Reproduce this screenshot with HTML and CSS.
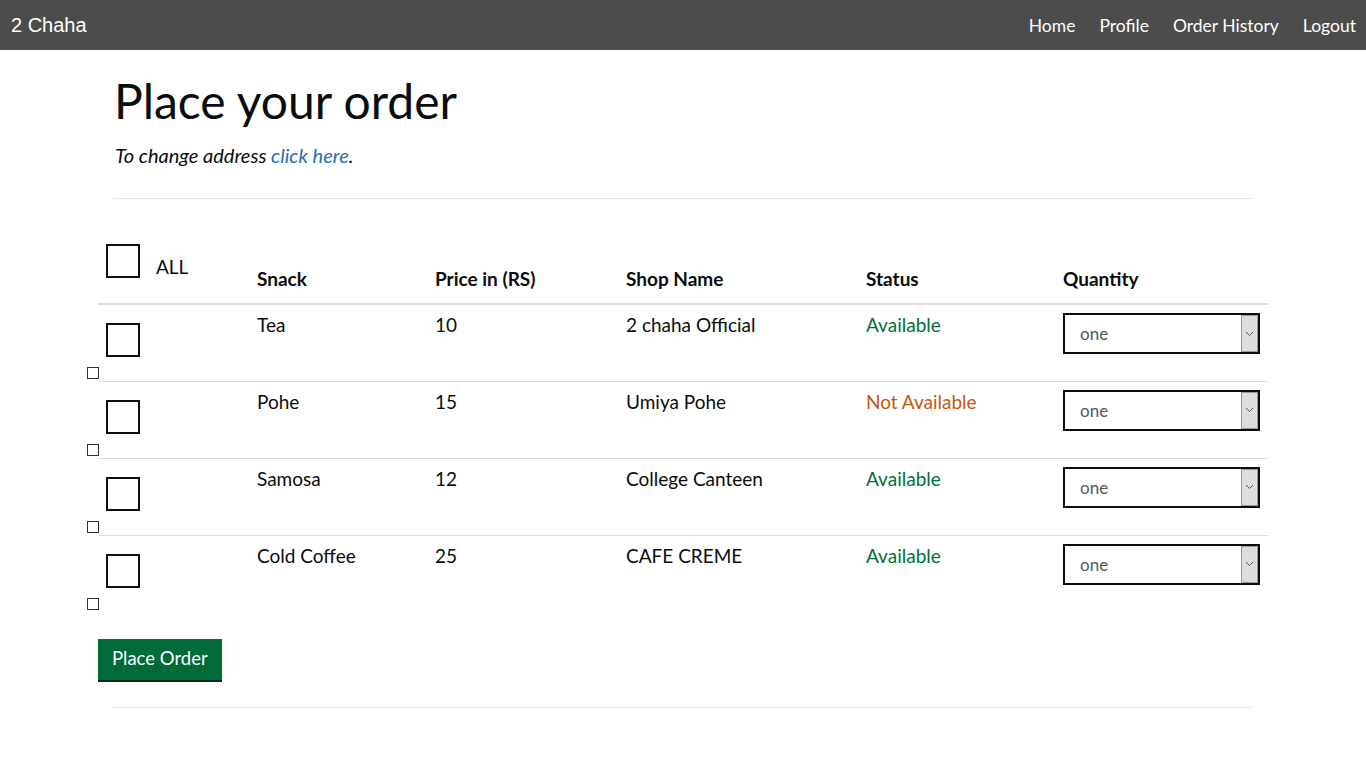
FILE: index.html
```html
<!DOCTYPE html>
<html lang="en">
<head>
<meta charset="utf-8">
<title>2 Chaha - Place your order</title>
<link rel="stylesheet" href="styles.css">
</head>
<body>
<nav class="navbar">
  <a class="brand" href="#">2 Chaha</a>
  <ul class="nav-links">
    <li><a href="#">Home</a></li>
    <li><a href="#">Profile</a></li>
    <li><a href="#">Order History</a></li>
    <li><a href="#">Logout</a></li>
  </ul>
</nav>
<main class="container">
  <h1 class="title">Place your order</h1>
  <p class="lead"><em>To change address <a href="#">click here</a>.</em></p>
  <hr class="rule rule-top">
  <form class="order-form">
    <table class="orders">
      <colgroup>
        <col class="c-check"><col class="c-snack"><col class="c-price"><col class="c-shop"><col class="c-status"><col class="c-qty">
      </colgroup>
      <thead>
        <tr>
          <th class="check-head"><div class="head-wrap"><span class="big-box"></span><span class="all">ALL</span></div></th>
          <th>Snack</th>
          <th>Price in (RS)</th>
          <th>Shop Name</th>
          <th>Status</th>
          <th>Quantity</th>
        </tr>
      </thead>
      <tbody>
        <tr>
          <td class="check-cell"><span class="big-box"></span><span class="small-box"></span></td>
          <td>Tea</td><td>10</td><td>2 chaha Official</td>
          <td class="ok">Available</td>
          <td class="qty"><div class="select"><span class="val">one</span><span class="arrow"><svg width="9" height="6" viewBox="0 0 9 6"><path d="M1 1l3.5 3.5L8 1" fill="none" stroke="#555" stroke-width="1"/></svg></span></div></td>
        </tr>
        <tr>
          <td class="check-cell"><span class="big-box"></span><span class="small-box"></span></td>
          <td>Pohe</td><td>15</td><td>Umiya Pohe</td>
          <td class="na">Not Available</td>
          <td class="qty"><div class="select"><span class="val">one</span><span class="arrow"><svg width="9" height="6" viewBox="0 0 9 6"><path d="M1 1l3.5 3.5L8 1" fill="none" stroke="#555" stroke-width="1"/></svg></span></div></td>
        </tr>
        <tr>
          <td class="check-cell"><span class="big-box"></span><span class="small-box"></span></td>
          <td>Samosa</td><td>12</td><td>College Canteen</td>
          <td class="ok">Available</td>
          <td class="qty"><div class="select"><span class="val">one</span><span class="arrow"><svg width="9" height="6" viewBox="0 0 9 6"><path d="M1 1l3.5 3.5L8 1" fill="none" stroke="#555" stroke-width="1"/></svg></span></div></td>
        </tr>
        <tr class="last">
          <td class="check-cell"><span class="big-box"></span><span class="small-box"></span></td>
          <td>Cold Coffee</td><td>25</td><td>CAFE CREME</td>
          <td class="ok">Available</td>
          <td class="qty"><div class="select"><span class="val">one</span><span class="arrow"><svg width="9" height="6" viewBox="0 0 9 6"><path d="M1 1l3.5 3.5L8 1" fill="none" stroke="#555" stroke-width="1"/></svg></span></div></td>
        </tr>
      </tbody>
    </table>
    <button type="button" class="btn">Place Order</button>
  </form>
  <hr class="rule rule-bottom">
</main>
</body>
</html>
```
FILE: styles.css
```css
* { box-sizing: border-box; }
html, body { margin: 0; padding: 0; background: #fff; }
body { font-family: Lato, "Noto Sans", sans-serif; color: #0b0c0c; }

.navbar {
  height: 50px;
  background: #4c4c4c;
  display: flex;
  align-items: center;
  justify-content: space-between;
  padding: 0 10px 0 11px;
}
.brand {
  font-family: "Liberation Sans", Arial, sans-serif;
  font-size: 20px;
  color: #fff;
  text-decoration: none;
}
.nav-links {
  list-style: none;
  margin: 0;
  padding: 0;
  display: flex;
  gap: 24px;
}
.nav-links a {
  color: #fff;
  text-decoration: none;
  font-family: Lato, sans-serif;
  font-size: 17.5px;
}

.container {
  width: 1140px;
  margin: 0 auto;
}
.title {
  margin: 0;
  padding-top: 23px;
  font-family: Lato, sans-serif;
  font-weight: 400;
  font-size: 48px;
  line-height: 56px;
  padding-left: 1px;
}
.lead {
  margin: 14px 0 0 2px;
  font-size: 20px;
  line-height: 25px;
}
.lead a { color: #1d70b8; text-decoration: none; }
.rule {
  border: 0;
  border-top: 1px solid #e8e8e8;
  margin: 0;
}
.rule-top { margin-top: 30px; }

.order-form { margin: 35px -15px 0; }
.orders {
  width: 1170px;
  border-collapse: collapse;
  table-layout: fixed;
  font-size: 19px;
}
.c-check { width: 159px; }
.c-snack { width: 178px; }
.c-price { width: 191px; }
.c-shop { width: 240px; }
.c-status { width: 197px; }
.c-qty { width: 205px; }

.orders th {
  text-align: left;
  font-weight: 700;
  vertical-align: bottom;
  padding: 0 0 12px;
  line-height: 25px;
  border-bottom: 2px solid #dcdcdc;
}
.orders th.check-head {
  vertical-align: top;
  padding: 10px 0 24px 8px;
  font-weight: 400;
}
.head-wrap {
  display: flex;
  align-items: flex-start;
}
.check-head .all { margin: 10px 0 0 16px; line-height: 25px; }

.big-box {
  display: block;
  width: 34px;
  height: 34px;
  border: 2px solid #0b0c0c;
  background: #fff;
}
.small-box {
  display: block;
  width: 12px;
  height: 12px;
  border: 1px solid #333;
  margin: 10px 0 0 -19px;
}

.orders td {
  vertical-align: top;
  padding: 7px 0 0;
  height: 77px;
  line-height: 25px;
  border-bottom: 1px solid #dcdcdc;
}
.orders tr.last td { border-bottom: 0; }
.orders td.check-cell { padding: 18px 0 0 8px; }
.orders td.qty { padding-top: 8px; }
.ok { color: #00703c; }
.na { color: #c9560f; }

.select {
  width: 197px;
  height: 41px;
  border: 2px solid #0b0c0c;
  display: flex;
  align-items: stretch;
  background: #fff;
}
.select .val {
  flex: 1;
  padding-left: 15px;
  color: #505a5f;
  font-family: Lato, sans-serif;
  font-size: 17px;
  line-height: 37px;
}
.select .arrow {
  width: 17px;
  background: #dddddd;
  border: 1px solid #999;
  display: flex;
  align-items: center;
  justify-content: center;
}

.btn {
  margin-top: 27px;
  background: #006a39;
  color: #fff;
  border: 0;
  box-shadow: 0 2px 0 #002d18;
  font-family: Lato, sans-serif;
  font-size: 18.5px;
  line-height: 20px;
  padding: 9px 14px 12px;
  height: 41px;
  cursor: pointer;
}
.rule-bottom { margin-top: 27px; }
```
